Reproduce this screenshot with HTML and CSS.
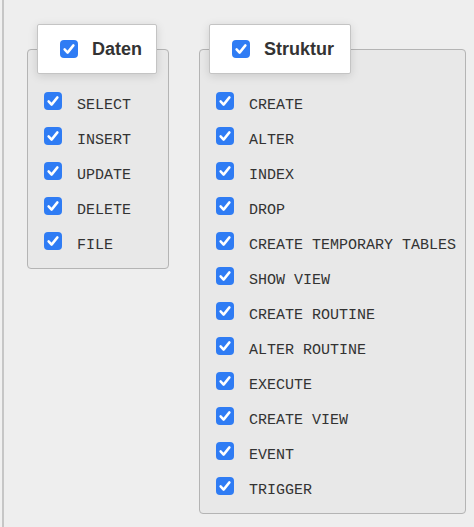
FILE: index.html
```html
<!DOCTYPE html>
<html lang="de">
<head>
<meta charset="utf-8">
<title>Rechte</title>
<link rel="stylesheet" href="styles.css">
</head>
<body>
<div class="panel">
  <fieldset class="group group-data">
    <legend class="legend">
      <span class="cb"><svg viewBox="0 0 18 18" width="18" height="18"><rect width="18" height="18" rx="4" fill="#2f7cf4"/><path d="M4.6 9.4 L7.6 12.6 L13.4 5.4" fill="none" stroke="#fff" stroke-width="2.5" stroke-linecap="round" stroke-linejoin="round"/></svg></span>
      <span class="legend-text">Daten</span>
    </legend>
    <ul class="items">
      <li class="item"><span class="cb"><svg viewBox="0 0 18 18" width="18" height="18"><rect width="18" height="18" rx="4" fill="#2f7cf4"/><path d="M4.6 9.4 L7.6 12.6 L13.4 5.4" fill="none" stroke="#fff" stroke-width="2.5" stroke-linecap="round" stroke-linejoin="round"/></svg></span><span class="label">SELECT</span></li>
      <li class="item"><span class="cb"><svg viewBox="0 0 18 18" width="18" height="18"><rect width="18" height="18" rx="4" fill="#2f7cf4"/><path d="M4.6 9.4 L7.6 12.6 L13.4 5.4" fill="none" stroke="#fff" stroke-width="2.5" stroke-linecap="round" stroke-linejoin="round"/></svg></span><span class="label">INSERT</span></li>
      <li class="item"><span class="cb"><svg viewBox="0 0 18 18" width="18" height="18"><rect width="18" height="18" rx="4" fill="#2f7cf4"/><path d="M4.6 9.4 L7.6 12.6 L13.4 5.4" fill="none" stroke="#fff" stroke-width="2.5" stroke-linecap="round" stroke-linejoin="round"/></svg></span><span class="label">UPDATE</span></li>
      <li class="item"><span class="cb"><svg viewBox="0 0 18 18" width="18" height="18"><rect width="18" height="18" rx="4" fill="#2f7cf4"/><path d="M4.6 9.4 L7.6 12.6 L13.4 5.4" fill="none" stroke="#fff" stroke-width="2.5" stroke-linecap="round" stroke-linejoin="round"/></svg></span><span class="label">DELETE</span></li>
      <li class="item"><span class="cb"><svg viewBox="0 0 18 18" width="18" height="18"><rect width="18" height="18" rx="4" fill="#2f7cf4"/><path d="M4.6 9.4 L7.6 12.6 L13.4 5.4" fill="none" stroke="#fff" stroke-width="2.5" stroke-linecap="round" stroke-linejoin="round"/></svg></span><span class="label">FILE</span></li>
    </ul>
  </fieldset>
  <fieldset class="group group-structure">
    <legend class="legend">
      <span class="cb"><svg viewBox="0 0 18 18" width="18" height="18"><rect width="18" height="18" rx="4" fill="#2f7cf4"/><path d="M4.6 9.4 L7.6 12.6 L13.4 5.4" fill="none" stroke="#fff" stroke-width="2.5" stroke-linecap="round" stroke-linejoin="round"/></svg></span>
      <span class="legend-text">Struktur</span>
    </legend>
    <ul class="items">
      <li class="item"><span class="cb"><svg viewBox="0 0 18 18" width="18" height="18"><rect width="18" height="18" rx="4" fill="#2f7cf4"/><path d="M4.6 9.4 L7.6 12.6 L13.4 5.4" fill="none" stroke="#fff" stroke-width="2.5" stroke-linecap="round" stroke-linejoin="round"/></svg></span><span class="label">CREATE</span></li>
      <li class="item"><span class="cb"><svg viewBox="0 0 18 18" width="18" height="18"><rect width="18" height="18" rx="4" fill="#2f7cf4"/><path d="M4.6 9.4 L7.6 12.6 L13.4 5.4" fill="none" stroke="#fff" stroke-width="2.5" stroke-linecap="round" stroke-linejoin="round"/></svg></span><span class="label">ALTER</span></li>
      <li class="item"><span class="cb"><svg viewBox="0 0 18 18" width="18" height="18"><rect width="18" height="18" rx="4" fill="#2f7cf4"/><path d="M4.6 9.4 L7.6 12.6 L13.4 5.4" fill="none" stroke="#fff" stroke-width="2.5" stroke-linecap="round" stroke-linejoin="round"/></svg></span><span class="label">INDEX</span></li>
      <li class="item"><span class="cb"><svg viewBox="0 0 18 18" width="18" height="18"><rect width="18" height="18" rx="4" fill="#2f7cf4"/><path d="M4.6 9.4 L7.6 12.6 L13.4 5.4" fill="none" stroke="#fff" stroke-width="2.5" stroke-linecap="round" stroke-linejoin="round"/></svg></span><span class="label">DROP</span></li>
      <li class="item"><span class="cb"><svg viewBox="0 0 18 18" width="18" height="18"><rect width="18" height="18" rx="4" fill="#2f7cf4"/><path d="M4.6 9.4 L7.6 12.6 L13.4 5.4" fill="none" stroke="#fff" stroke-width="2.5" stroke-linecap="round" stroke-linejoin="round"/></svg></span><span class="label">CREATE TEMPORARY TABLES</span></li>
      <li class="item"><span class="cb"><svg viewBox="0 0 18 18" width="18" height="18"><rect width="18" height="18" rx="4" fill="#2f7cf4"/><path d="M4.6 9.4 L7.6 12.6 L13.4 5.4" fill="none" stroke="#fff" stroke-width="2.5" stroke-linecap="round" stroke-linejoin="round"/></svg></span><span class="label">SHOW VIEW</span></li>
      <li class="item"><span class="cb"><svg viewBox="0 0 18 18" width="18" height="18"><rect width="18" height="18" rx="4" fill="#2f7cf4"/><path d="M4.6 9.4 L7.6 12.6 L13.4 5.4" fill="none" stroke="#fff" stroke-width="2.5" stroke-linecap="round" stroke-linejoin="round"/></svg></span><span class="label">CREATE ROUTINE</span></li>
      <li class="item"><span class="cb"><svg viewBox="0 0 18 18" width="18" height="18"><rect width="18" height="18" rx="4" fill="#2f7cf4"/><path d="M4.6 9.4 L7.6 12.6 L13.4 5.4" fill="none" stroke="#fff" stroke-width="2.5" stroke-linecap="round" stroke-linejoin="round"/></svg></span><span class="label">ALTER ROUTINE</span></li>
      <li class="item"><span class="cb"><svg viewBox="0 0 18 18" width="18" height="18"><rect width="18" height="18" rx="4" fill="#2f7cf4"/><path d="M4.6 9.4 L7.6 12.6 L13.4 5.4" fill="none" stroke="#fff" stroke-width="2.5" stroke-linecap="round" stroke-linejoin="round"/></svg></span><span class="label">EXECUTE</span></li>
      <li class="item"><span class="cb"><svg viewBox="0 0 18 18" width="18" height="18"><rect width="18" height="18" rx="4" fill="#2f7cf4"/><path d="M4.6 9.4 L7.6 12.6 L13.4 5.4" fill="none" stroke="#fff" stroke-width="2.5" stroke-linecap="round" stroke-linejoin="round"/></svg></span><span class="label">CREATE VIEW</span></li>
      <li class="item"><span class="cb"><svg viewBox="0 0 18 18" width="18" height="18"><rect width="18" height="18" rx="4" fill="#2f7cf4"/><path d="M4.6 9.4 L7.6 12.6 L13.4 5.4" fill="none" stroke="#fff" stroke-width="2.5" stroke-linecap="round" stroke-linejoin="round"/></svg></span><span class="label">EVENT</span></li>
      <li class="item"><span class="cb"><svg viewBox="0 0 18 18" width="18" height="18"><rect width="18" height="18" rx="4" fill="#2f7cf4"/><path d="M4.6 9.4 L7.6 12.6 L13.4 5.4" fill="none" stroke="#fff" stroke-width="2.5" stroke-linecap="round" stroke-linejoin="round"/></svg></span><span class="label">TRIGGER</span></li>
    </ul>
  </fieldset>
</div>
</body>
</html>
```
FILE: styles.css
```css
html, body {
  margin: 0;
  height: 100%;
}
body {
  background: #f0f0f0;
  padding-left: 2px;
  box-sizing: border-box;
  font-family: "Liberation Sans", Arial, sans-serif;
  color: #333;
}
.panel {
  height: 100%;
  box-sizing: border-box;
  border-left: 2px solid #c6c6c6;
  background: #eeeeee;
  padding: 24px 0 0 23px;
  display: flex;
  align-items: flex-start;
  gap: 30px;
}
.group {
  margin: 0;
  padding: 0;
  border: 1px solid #b4b4b4;
  border-radius: 4px;
  background: #e8e8e8;
  box-sizing: border-box;
  min-width: 0;
}
.group-data { width: 142px; }
.group-structure { width: 267px; }
.legend {
  margin-left: 9px;
  padding: 0 14px 0 22px;
  height: 50px;
  box-sizing: border-box;
  display: flex;
  align-items: center;
  gap: 14px;
  background: #fff;
  border: 1px solid #c4c4c4;
  border-radius: 2px;
  box-shadow: 0 2px 10px rgba(0, 0, 0, 0.13);
}
.group-structure .legend {
  padding-right: 16px;
}
.legend-text {
  font-family: "Liberation Sans", Arial, sans-serif;
  font-weight: bold;
  font-size: 18px;
  line-height: 20px;
  color: #333;
}
.cb {
  display: block;
  width: 18px;
  height: 18px;
  flex: none;
}
.cb svg { display: block; }
.items {
  list-style: none;
  margin: 0;
  padding: 18px 0 18px 16px;
  display: flex;
  flex-direction: column;
  gap: 17px;
}
.item {
  display: flex;
  align-items: center;
  gap: 15px;
  height: 18px;
}
.label {
  font-family: "Liberation Mono", "Courier New", monospace;
  font-size: 15px;
  line-height: 18px;
  color: #333;
  white-space: nowrap;
  margin-top: 10px;
}
```
